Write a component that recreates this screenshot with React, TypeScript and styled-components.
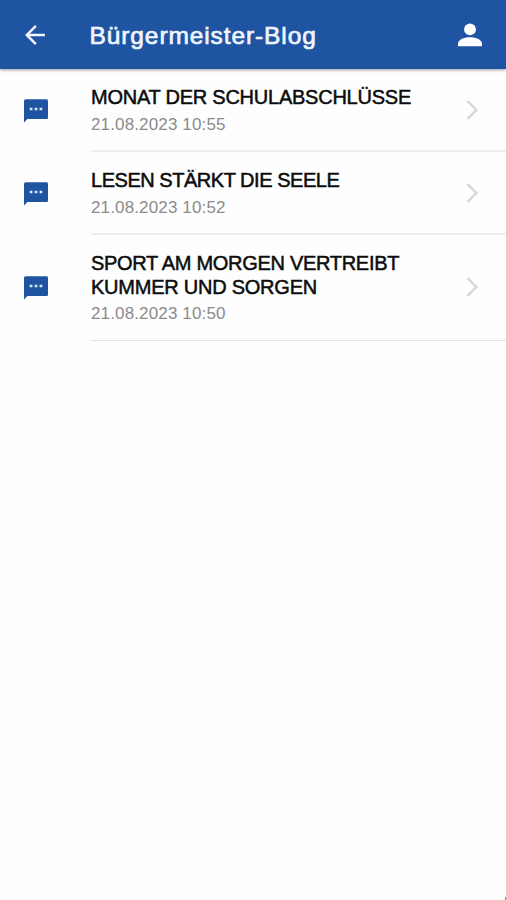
import React from "react";
import styled, { createGlobalStyle } from "styled-components";

const GlobalStyle = createGlobalStyle`
  *, *::before, *::after { box-sizing: border-box; }
  body { margin: 0; background: #fefefe; font-family: "Liberation Sans", Arial, Helvetica, sans-serif; }
`;

const Screen = styled.div`
  display: flex;
  flex-direction: column;
  min-height: 900px;
  background: #fefefe;
`;

const AppBar = styled.header`
  display: flex;
  align-items: center;
  height: 69px;
  padding: 1px 24px 0 25px;
  background: #1f54a3;
  color: #f0f5ff;
  box-shadow: 0 1px 3px rgba(0, 0, 0, 0.4);
`;

const BarButton = styled.button`
  display: flex;
  padding: 0;
  border: 0;
  background: none;
  color: inherit;
`;

const Title = styled.h1`
  flex: 1;
  margin: 1px 0 0 44.5px;
  font-size: 24.5px;
  font-weight: 400;
  line-height: 30px;
  letter-spacing: 0.9px;
  white-space: nowrap;
  -webkit-text-stroke: 0.7px currentColor;
`;

const List = styled.ul`
  margin: 0;
  padding: 0;
  list-style: none;
`;

const RowBody = styled.div`
  display: flex;
  flex: 1;
  align-items: center;
  justify-content: space-between;
  height: 100%;
  padding-right: 27px;
  border-bottom: 2px solid #eeeeee;
`;

const Row = styled.li<{ $height: number }>`
  display: flex;
  align-items: center;
  height: ${(p) => p.$height}px;
  padding-left: 24px;

  &:last-child ${RowBody} {
    padding-bottom: 1px;
    border-bottom: 1px solid #e2e2e2;
  }
`;

const RowIcon = styled.span`
  display: flex;
  width: 67px;
`;

const RowText = styled.div`
  padding-top: 3px;
`;

const TitleLine = styled.div<{ $tracking: number }>`
  font-size: 20px;
  line-height: 23.5px;
  letter-spacing: ${(p) => p.$tracking}px;
  color: #0c0c0c;
  white-space: nowrap;
  -webkit-text-stroke: 0.5px currentColor;
`;

const RowDate = styled.div`
  margin-top: 4px;
  font-size: 17px;
  line-height: 22px;
  letter-spacing: 0.14px;
  color: #8b8b8b;
`;

const CornerMark = styled.span`
  width: 1px;
  height: 3px;
  margin-top: auto;
  align-self: flex-end;
  background: #8d8494;
`;

const posts = [
  {
    lines: [{ text: "MONAT DER SCHULABSCHLÜSSE", tracking: -0.24 }],
    date: "21.08.2023 10:55",
    height: 83,
  },
  {
    lines: [{ text: "LESEN STÄRKT DIE SEELE", tracking: -0.47 }],
    date: "21.08.2023 10:52",
    height: 83,
  },
  {
    lines: [
      { text: "SPORT AM MORGEN VERTREIBT", tracking: -0.3 },
      { text: "KUMMER UND SORGEN", tracking: -0.24 },
    ],
    date: "21.08.2023 10:50",
    height: 106,
  },
];

const BackIcon = () => (
  <svg width="20" height="20" viewBox="4 4 16 16" fill="currentColor">
    <path d="M20 11H7.83l5.59-5.59L12 4l-8 8 8 8 1.41-1.41L7.83 13H20v-2z" />
  </svg>
);

const PersonIcon = () => (
  <svg width="24" height="24" viewBox="0 0 24 24" fill="#fff">
    <circle cx="12" cy="6.4" r="5.9" />
    <path d="M0 23.2v-2.4c0-4 5.4-6.6 12-6.6s12 2.6 12 6.6v2.4z" />
  </svg>
);

const ChatIcon = () => (
  <svg width="24" height="24" viewBox="0 0 24 24">
    <path d="M1.8 0.3h20.6c.9 0 1.6.7 1.6 1.6v16.5c0 .9-.7 1.6-1.6 1.6H3.4L0 23.6V2.1C0 1.1.8.3 1.8.3z" fill="#1f54a3" />
    <path d="M5.7 8.8h2.7v2.5H5.7zM10.7 8.8h2.7v2.5h-2.7zM15.6 8.8h2.7v2.5h-2.7z" fill="#dce8fa" />
  </svg>
);

const ChevronIcon = () => (
  <svg width="13" height="22" viewBox="0 0 13 22" fill="none" stroke="#d6d6d6" strokeWidth="2.4">
    <path d="M1.4 2l9 9-9 9" />
  </svg>
);

export default function App() {
  return (
    <Screen>
      <GlobalStyle />
      <AppBar>
        <BarButton aria-label="Zurück"><BackIcon /></BarButton>
        <Title>Bürgermeister-Blog</Title>
        <BarButton aria-label="Profil"><PersonIcon /></BarButton>
      </AppBar>
      <List>
        {posts.map((post) => (
          <Row key={post.date} $height={post.height}>
            <RowIcon><ChatIcon /></RowIcon>
            <RowBody>
              <RowText>
                {post.lines.map((line) => (
                  <TitleLine key={line.text} $tracking={line.tracking}>{line.text}</TitleLine>
                ))}
                <RowDate>{post.date}</RowDate>
              </RowText>
              <ChevronIcon />
            </RowBody>
          </Row>
        ))}
      </List>
      <CornerMark />
    </Screen>
  );
}
